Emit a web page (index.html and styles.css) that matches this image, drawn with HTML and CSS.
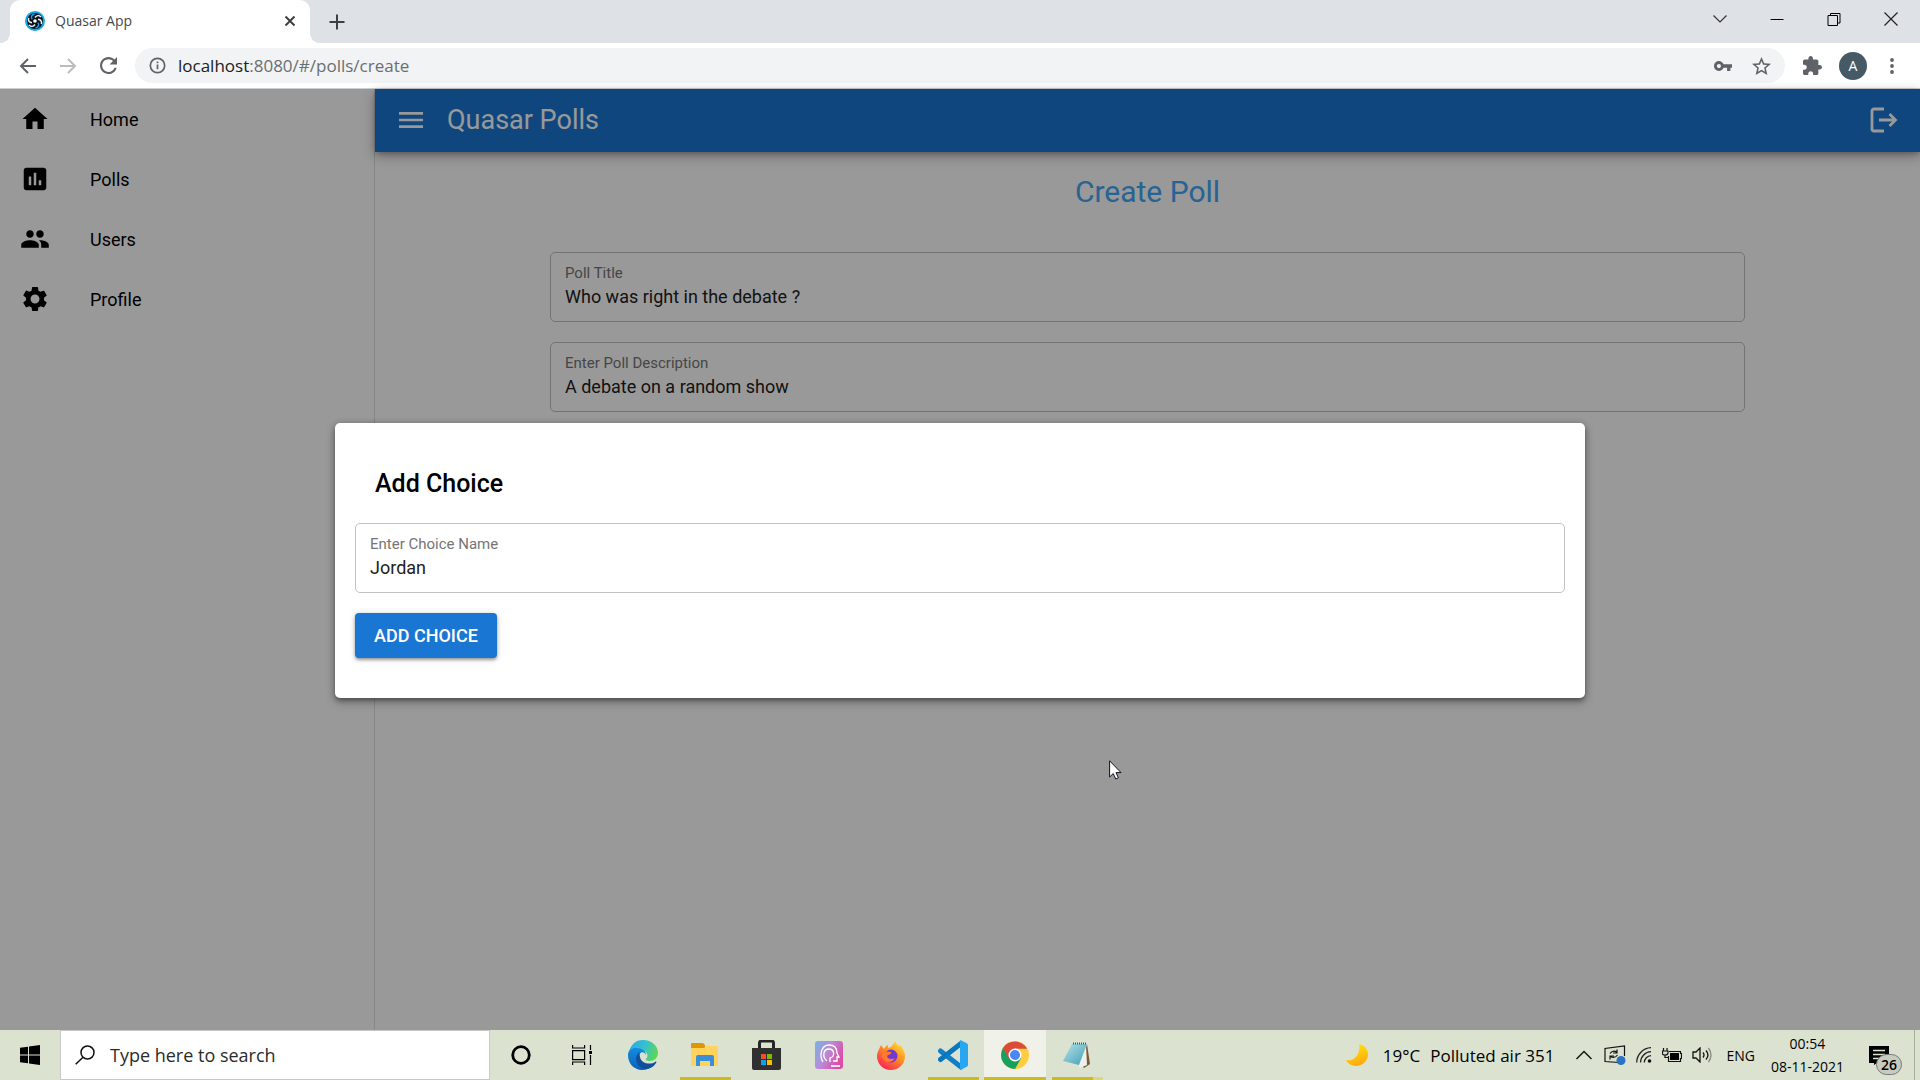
FILE: index.html
```html
<!DOCTYPE html>
<html lang="en">
<head>
<meta charset="utf-8">
<title>Quasar App</title>
<link rel="stylesheet" href="styles.css">
</head>
<body>
<header class="browser">
  <div class="tabstrip">
    <div class="tab">
      <svg class="favicon" viewBox="0 0 20 20" width="20" height="20">
        <circle cx="10" cy="10" r="9" fill="#0b1118" stroke="#12a7e8" stroke-width="2"/>
        <g fill="none" stroke="#e8f4fa" stroke-width="1.5">
          <path d="M10 6.5Q12.500 3 16 6"/><path d="M13 8.250Q17.300 8.700 16.400 13.200"/>
          <path d="M7 11.750Q2.700 11.300 3.600 6.800"/><path d="M10 13.500Q7.500 17 4 14"/>
        </g>
        <g fill="none" stroke="#12a7e8" stroke-width="1.400"><path d="M7 8.250Q5.200 4.300 9.500 3"/><path d="M13 11.750Q14.800 15.700 10.500 17"/></g>
        <circle cx="10" cy="10" r="1.800" fill="#fff"/>
      </svg>
      <span class="tab-title">Quasar App</span>
      <button class="icon-btn tab-close" aria-label="Close tab"><svg viewBox="0 0 12 12" width="12" height="12" fill="none" stroke="#3c4043" stroke-width="2"><path d="M1.500 1.500l9 9M10.500 1.500l-9 9"/></svg></button>
    </div>
    <button class="icon-btn new-tab" aria-label="New tab"><svg viewBox="0 0 16 16" width="16" height="16" fill="none" stroke="#3c4043" stroke-width="2"><path d="M8 0.500v15M0.500 8h15"/></svg></button>
    <div class="window-controls">
      <button class="icon-btn" aria-label="Search tabs"><svg viewBox="0 0 14 14" width="14" height="14" fill="none" stroke="#333" stroke-width="1.200"><path d="M0.500 3.500l6.500 6.500 6.500-6.500"/></svg></button>
      <button class="icon-btn" aria-label="Minimize"><svg viewBox="0 0 14 14" width="14" height="14"><path d="M0.500 7h13v1h-13z"/></svg></button>
      <button class="icon-btn" aria-label="Restore"><svg viewBox="0 0 14 14" width="14" height="14" fill="none" stroke="#000"><path d="M1 3.500h9.500V13.500H1zM3.500 3.500V1.500H13V11h-2.500"/></svg></button>
      <button class="icon-btn" aria-label="Close"><svg viewBox="0 0 14 14" width="14" height="14" fill="none" stroke="#222" stroke-width="1.200"><path d="M0.500 0.500l13 13M13.500 0.500l-13 13"/></svg></button>
    </div>
  </div>
  <div class="toolbar">
    <button class="icon-btn nav-btn" aria-label="Back"><svg viewBox="0 0 18 16" width="18" height="16" fill="none" stroke="#5f6368" stroke-width="2"><path d="M17 8H2M9 1L2 8l7 7"/></svg></button>
    <button class="icon-btn nav-btn" aria-label="Forward"><svg viewBox="0 0 18 16" width="18" height="16" fill="none" stroke="#babcbe" stroke-width="2"><path d="M1 8h15M9 1l7 7-7 7"/></svg></button>
    <button class="icon-btn nav-btn" aria-label="Reload"><svg viewBox="4 4 16 16" width="17" height="17" fill="#5f6368"><path d="M17.650 6.350C16.200 4.900 14.210 4 12 4c-4.420 0-7.990 3.580-7.990 8s3.570 8 7.990 8c3.730 0 6.840-2.550 7.730-6h-2.080c-.82 2.330-3.040 4-5.650 4-3.310 0-6-2.690-6-6s2.690-6 6-6c1.660 0 3.140.69 4.220 1.780L13 11h7V4l-2.350 2.350z"/></svg></button>
    <div class="omnibox">
      <svg viewBox="0 0 18 18" width="17" height="17" fill="none" stroke="#5f6368" stroke-width="1.800"><circle cx="9" cy="9" r="7.600"/><path d="M9 8v5M9 4.800v1.900"/></svg>
      <a class="url" href="#/polls/create"><span class="url-host">localhost</span>:8080/#/polls/create</a>
      <button class="icon-btn" aria-label="Passwords"><svg viewBox="1 6 22 12" width="18" height="10" fill="#5f6368"><path d="M12.650 10C11.830 7.670 9.610 6 7 6c-3.310 0-6 2.690-6 6s2.690 6 6 6c2.610 0 4.830-1.670 5.650-4H17v4h4v-4h2v-4H12.650zM7 14.500c-1.380 0-2.500-1.120-2.500-2.500s1.120-2.500 2.500-2.500 2.500 1.120 2.500 2.500-1.120 2.500-2.500 2.500z"/></svg></button>
      <button class="icon-btn" aria-label="Bookmark"><svg viewBox="2 2 20 19" width="19" height="18" fill="#5f6368"><path d="M22 9.240l-7.190-.62L12 2 9.190 8.630 2 9.240l5.460 4.730L5.820 21 12 17.270 18.180 21l-1.630-7.030L22 9.240zM12 15.400l-3.760 2.270 1-4.280-3.320-2.880 4.380-.38L12 6.100l1.710 4.040 4.380.38-3.320 2.880 1 4.280L12 15.400z"/></svg></button>
    </div>
    <button class="icon-btn ext" aria-label="Extensions"><svg viewBox="2 1 21 21" width="19" height="19" fill="#5f6368"><path d="M20.500 11H19V7c0-1.100-.9-2-2-2h-4V3.500C13 2.120 11.880 1 10.500 1S8 2.120 8 3.500V5H4c-1.100 0-1.990.9-1.990 2v3.800H3.500c1.490 0 2.700 1.210 2.700 2.700s-1.210 2.700-2.700 2.700H2V20c0 1.100.9 2 2 2h3.800v-1.500c0-1.490 1.210-2.700 2.700-2.700 1.490 0 2.700 1.210 2.700 2.700V22H17c1.100 0 2-.9 2-2v-4h1.500c1.380 0 2.500-1.120 2.500-2.500S21.880 11 20.500 11z"/></svg></button>
    <button class="avatar" aria-label="Account">A</button>
    <button class="icon-btn kebab" aria-label="Menu"><svg viewBox="0 0 4 16" width="4" height="16" fill="#5f6368"><circle cx="2" cy="2" r="1.900"/><circle cx="2" cy="8" r="1.900"/><circle cx="2" cy="14" r="1.900"/></svg></button>
  </div>
</header>

<div class="app">
  <nav class="drawer">
    <a href="#/"><svg viewBox="0 0 24 24"><path d="M10 20v-6h4v6h5v-8h3L12 3 2 12h3v8z"/></svg>Home</a>
    <a href="#/polls"><svg viewBox="0 0 24 24"><path d="M19 3H5c-1.100 0-2 .9-2 2v14c0 1.100.9 2 2 2h14c1.100 0 2-.9 2-2V5c0-1.100-.9-2-2-2zM9 17H7v-7h2v7zm4 0h-2V7h2v10zm4 0h-2v-4h2v4z"/></svg>Polls</a>
    <a href="#/users"><svg viewBox="0 0 24 24"><path d="M16 11c1.660 0 2.990-1.340 2.990-3S17.660 5 16 5c-1.660 0-3 1.340-3 3s1.340 3 3 3zm-8 0c1.660 0 2.990-1.340 2.990-3S9.660 5 8 5C6.340 5 5 6.340 5 8s1.340 3 3 3zm0 2c-2.330 0-7 1.170-7 3.500V19h14v-2.500c0-2.330-4.670-3.500-7-3.500zm8 0c-.29 0-.62.020-.97.050 1.160.84 1.970 1.970 1.970 3.450V19h6v-2.500c0-2.330-4.670-3.500-7-3.500z"/></svg>Users</a>
    <a href="#/profile"><svg viewBox="0 0 24 24"><path d="M19.140 12.940c.04-.3.060-.61.060-.94 0-.32-.02-.64-.07-.94l2.030-1.580c.18-.14.230-.41.120-.61l-1.920-3.320c-.12-.22-.37-.29-.59-.22l-2.390.96c-.5-.38-1.030-.7-1.620-.94l-.36-2.540c-.04-.24-.24-.41-.48-.41h-3.840c-.24 0-.43.170-.47.410l-.36 2.540c-.59.240-1.130.57-1.620.94l-2.390-.96c-.22-.08-.47 0-.59.220L2.740 8.870c-.12.210-.08.470.120.610l2.030 1.580c-.05.300-.09.630-.09.940s.02.640.070.940l-2.030 1.580c-.18.140-.23.410-.12.610l1.920 3.320c.12.220.37.290.59.220l2.390-.96c.5.380 1.030.7 1.620.94l.36 2.540c.05.240.24.410.48.410h3.840c.24 0 .44-.17.470-.41l.36-2.540c.59-.24 1.130-.56 1.620-.94l2.390.96c.22.080.47 0 .59-.22l1.920-3.320c.12-.22.070-.47-.12-.61l-2.010-1.580zM12 15.600c-1.980 0-3.600-1.620-3.600-3.600s1.620-3.600 3.600-3.600 3.600 1.620 3.600 3.600-1.620 3.600-3.600 3.600z"/></svg>Profile</a>
  </nav>
  <div class="main">
    <div class="app-bar">
      <button class="icon-btn" aria-label="Toggle menu"><svg viewBox="0 0 24 24" width="32" height="32" fill="#fff"><path d="M3 18h18v-2H3v2zm0-5h18v-2H3v2zm0-7v2h18V6H3z"/></svg></button>
      <span class="app-title">Quasar Polls</span>
      <button class="icon-btn" aria-label="Log out"><svg viewBox="0 0 30 30" width="30" height="30" fill="none" stroke="#fff" stroke-width="2.800"><path d="M16 4H6a2 2 0 0 0-2 2v18a2 2 0 0 0 2 2h10M11 15h17M21.500 9L27.500 15l-6 6"/></svg></button>
    </div>
    <main class="page">
      <h1>Create Poll</h1>
      <form class="poll-form">
        <label class="field"><span>Poll Title</span><input type="text" value="Who was right in the debate ?"></label>
        <label class="field"><span>Enter Poll Description</span><input type="text" value="A debate on a random show"></label>
      </form>
    </main>
  </div>
  <div class="backdrop">
    <section class="dialog" role="dialog" aria-labelledby="dialog-title">
      <h2 id="dialog-title">Add Choice</h2>
      <label class="field"><span>Enter Choice Name</span><input type="text" value="Jordan"></label>
      <button class="primary">ADD CHOICE</button>
    </section>
  </div>
</div>

<footer class="taskbar">
  <button class="icon-btn start" aria-label="Start"><svg viewBox="0 0 20 20" width="20" height="20"><path d="M0 2.800L8 1.700V9.500H0zM9 1.500L20 0v9.500H9zM0 10.500h8v7.800L0 17.200zM9 10.500h11V20L9 18.500z"/></svg></button>
  <label class="search">
    <svg viewBox="0 0 20 20" width="20" height="20" fill="none" stroke="#111" stroke-width="1.500"><circle cx="12.500" cy="7.500" r="6.500"/><path d="M8 12.200L0.700 19.300"/></svg>
    <input type="text" aria-label="Search" placeholder="Type here to search">
  </label>
  <div class="pins">
    <button class="icon-btn system" aria-label="Cortana"><svg viewBox="0 0 20 20" width="20" height="20"><circle cx="10" cy="10" r="8.300" fill="none" stroke="#000" stroke-width="2.800"/></svg></button>
    <button class="icon-btn system" aria-label="Task view"><svg viewBox="0 0 20 20" width="20" height="20" fill="none" stroke="#000" stroke-width="1.200"><path d="M0.600 5.600h12v9h-12zM0.600 0v3h12V0M0.600 20v-3h12v3M18.500 0v5M18.500 10v10"/><path d="M17 6h3v3h-3z" fill="#000" stroke="none"/></svg></button>
    <button class="icon-btn" aria-label="Edge"><svg viewBox="0 0 30 30" width="30" height="30">
      <defs><linearGradient id="e1" x1="0" y1="0.300" x2="1" y2="0.600"><stop offset="0" stop-color="#2aa9e8"/><stop offset=".5" stop-color="#35c1d0"/><stop offset="1" stop-color="#5fd84c"/></linearGradient><linearGradient id="e2" x2="0" y2="1"><stop stop-color="#168bdc"/><stop offset="1" stop-color="#0a62b8"/></linearGradient></defs>
      <path d="M1 11C4 3 9 0 15 0c9 0 15 6 15 13 0 5-4 8-8 8-3 0-5-1-4-2 3-3 1-8-3-8C9 10 5 9 1 11z" fill="url(#e1)"/>
      <path d="M0 15C0 10 4 8 8 8c6 0 10 3 10 7-1-3-5-4-6-1-2 5 4 14 9 14-3 2-6 2-8 2C5 29 0 23 0 15z" fill="url(#e2)"/>
      <path d="M12 12c-5 3-5 10-1 14 4 5 13 4 17-3 1-1 0-2-1-1-4 3-14 2-15-5-1-2-1-4 0-5z" fill="#104f9c"/></svg></button>
    <button class="icon-btn running" aria-label="File Explorer"><svg viewBox="0 0 28 24" width="28" height="24"><path d="M0 1q0-1 1-1h11l2 2v3H0z" fill="#dd9706"/><path d="M0 5h13l2-2h11q1 0 1 1v18q0 1-1 1H1q-1 0-1-1z" fill="#ffd35c"/><path d="M5 14q0-2 2-2h14q2 0 2 2v9h-4v-5h-10v5H5z" fill="#3b8fd8"/></svg></button>
    <button class="icon-btn" aria-label="Store"><svg viewBox="0 0 30 30" width="30" height="30"><path d="M7.500 9V3q0-2 2-2h10q2 0 2 2v6" fill="none" stroke="#252525" stroke-width="3"/><path d="M0 8h29v20q0 2-2 2H2q-2 0-2-2z" fill="#303030"/><path d="M9 14h5v5H9z" fill="#f25022"/><path d="M15 14h5v5h-5z" fill="#7fba00"/><path d="M9 20h5v5H9z" fill="#00a4ef"/><path d="M15 20h5v5h-5z" fill="#ffb900"/></svg></button>
    <button class="icon-btn" aria-label="MyASUS"><svg viewBox="0 0 28 28" width="28" height="28"><defs><linearGradient id="m1" y2="0.500"><stop stop-color="#75b5e0"/><stop offset=".5" stop-color="#b98bd8"/><stop offset="1" stop-color="#dc4ea5"/></linearGradient></defs><rect width="28" height="28" rx="3" fill="url(#m1)"/><g fill="none" stroke="#fff" stroke-width="1.300"><path d="M8 21C4 15 6 4 14 4c6 0 8 4 8 8l2 4h-2v4h-4M12 20c-5-4-4-12 2-12 6 0 6 8 1 9v4"/></g><path d="M16 24h9v2h-9z" fill="#fff" opacity=".8"/></svg></button>
    <button class="icon-btn" aria-label="Firefox"><svg viewBox="0 0 28 29" width="28" height="29"><defs><linearGradient id="f1" x1="1" x2="0.300" y2="1"><stop stop-color="#fff04a"/><stop offset=".45" stop-color="#ff9a1f"/><stop offset="1" stop-color="#fb2655"/></linearGradient></defs><path d="M3 6l1-2 3 4 2-3 2-1 0 3 3-1 3-4 1-2c1 3 3 4 4 5l1-1c3 3 5 7 5 11 0 8-6 14-14 14S0 23 0 15c0-4 2-6 3-9z" fill="url(#f1)"/><circle cx="14" cy="15" r="6.500" fill="#7038d5"/><path d="M5 10l9 1c1 2-3 3-4 4 0 3 5 4 8 2-3 6-11 5-13-1z" fill="#ff7931"/></svg></button>
    <button class="icon-btn running" aria-label="Visual Studio Code"><svg viewBox="0 0 30 30" width="30" height="30"><path d="M2.500 11L23 27" stroke="#117fc5" stroke-width="5" stroke-linecap="round"/><path d="M2.500 19.500L23 3.500" stroke="#0877bc" stroke-width="5" stroke-linecap="round"/><path d="M22 0l6.500 3Q30 4 30 5v20q0 1-1.500 2L22 30z" fill="#27a6f2"/></svg></button>
    <button class="icon-btn running active" aria-label="Chrome"><svg viewBox="0 0 28 28" width="28" height="28"><circle cx="14" cy="14" r="14" fill="#ffcd42"/><path d="M14 14L1.900 7A14 14 0 0 0 14 28l6-10.500z" fill="#18a05e"/><path d="M14 14L1.900 7A14 14 0 0 1 26.100 7.700H14z" fill="#db4b3b"/><path d="M1.900 7l6 10.500L14 14V7.700z" fill="#db4b3b"/><circle cx="14" cy="14" r="6.500" fill="#fff"/><circle cx="14" cy="14" r="5" fill="#4b87f4"/></svg></button>
    <button class="icon-btn running stacked" aria-label="Notepad"><svg viewBox="0 0 28 26" width="28" height="26"><path d="M24 2l3 20-6 4-3-4z" fill="#7a5a33"/><path d="M23 3l1 20-7 3-2-4z" fill="#f0efe9"/><defs><linearGradient id="n1" x2="1" y2="1"><stop stop-color="#b5e2e8"/><stop offset="1" stop-color="#3f9fb4"/></linearGradient></defs><path d="M9 2h15l-8 21L0 19z" fill="url(#n1)"/><path d="M10 1.500h14" stroke="#555" stroke-width="2" stroke-dasharray="1 1"/></svg></button>
  </div>
  <div class="tray">
    <svg viewBox="0 0 22 22" width="22" height="22"><defs><linearGradient id="w1" x2="0.300" y2="1"><stop stop-color="#ffe900"/><stop offset="1" stop-color="#ffac10"/></linearGradient></defs><path d="M13 0C20 1 24 9 21 15 17 24 4 24 0 16 8 18 15 10 13 0z" fill="url(#w1)"/></svg>
    <span class="weather"><span>19°C</span><span>Polluted air 351</span></span>
    <button class="icon-btn" aria-label="Show hidden icons"><svg viewBox="0 0 16 10" width="16" height="10" fill="none" stroke="#111" stroke-width="1.400"><path d="M0.500 9L8 1.500 15.500 9"/></svg></button>
    <div class="status">
      <svg viewBox="0 0 22 20" width="22" height="20" fill="none" stroke="#111" stroke-width="1.200"><path d="M15 17.500L1 16.500V3.500L20.500 1v10M6 8.500q3-4 7-1M13 4.500v3.500h-4M13.500 10q-3 4-7 1.500M6 14.500V11h4"/><circle cx="17" cy="15.500" r="4.500" fill="#2a72c4" stroke="none"/></svg>
      <svg viewBox="0 0 16 16" width="16" height="16" fill="none" stroke="#222" stroke-width="1.300"><path d="M0.700 15.500A15 15 0 0 1 15 0.700M4.500 15.500A11 11 0 0 1 15 4.700M8.300 15.500A7 7 0 0 1 15 8.700"/><circle cx="13.500" cy="14" r="1.800" fill="#111" stroke="none"/></svg>
      <svg viewBox="0 0 20 14" width="20" height="14"><path d="M8 5h9v7H8z"/><path d="M7 3.500h11.500v2H19.500v5h-1v3H6.500V8" fill="none" stroke="#111" stroke-width="1.200"/><path d="M1.500 0v3M5 0v3M0.500 3h5.500v2q0 2-3 2t-2.500-2zM3 7v2.500h3" fill="none" stroke="#111" stroke-width="1.200"/></svg>
      <svg viewBox="0 0 20 16" width="20" height="16" fill="none" stroke="#111" stroke-width="1.300"><path d="M1 5h3l4-4v14l-4-4H1zM11 5.500q2 2.500 0 5M14 3.500q4 4.500 0 9"/><path d="M16.500 1q5 7 0 14" stroke="#888"/></svg>
    </div>
    <span class="lang">ENG</span>
    <time class="clock" datetime="2021-11-08T00:54"><span>00:54</span><span>08-11-2021</span></time>
    <button class="icon-btn notes" aria-label="Notifications"><svg viewBox="0 0 20 19" width="20" height="19"><path d="M0 0h20v17H8l-3 2v-2H0z"/><path d="M4 4.500h12M4 8.500h12M4 12.500h7" stroke="#dce2d0" stroke-width="1.300"/></svg><span class="badge">26</span></button>
  </div>
</footer>
<svg class="cursor" viewBox="0 0 13 20" width="13" height="20"><path d="M0.600 0.800V17l3.600-3.400 2.600 5.400 2.600-1.200L7 12.600h5z" fill="#fff" stroke="#101020"/></svg>
</body>
</html>
```

FILE: styles.css
```css
* { box-sizing: border-box; }

body {
  margin: 0;
  height: 100vh;
  display: flex;
  flex-direction: column;
  overflow: hidden;
  font-family: Roboto, sans-serif;
  font-size: 18px;
  color: #000;
}

button, input { font: inherit; color: inherit; border: 0; padding: 0; margin: 0; background: none; }
h1, h2 { margin: 0; }
a { color: inherit; text-decoration: none; }
svg { flex: none; display: block; }

.icon-btn { display: flex; align-items: center; justify-content: center; }

/* Browser window */
.browser { flex: none; font-family: "Open Sans", sans-serif; border-bottom: 1px solid #cdcfd1; }

.tabstrip { display: flex; height: 43px; padding-left: 10px; background: #dee1e6; }
.tab {
  position: relative;
  display: flex;
  align-items: center;
  gap: 10px;
  width: 300px;
  padding: 0 14px 2px 15px;
  background: #fff;
  border-radius: 10px 10px 0 0;
}
.tab::before, .tab::after {
  content: "";
  position: absolute;
  bottom: 0;
  width: 10px;
  height: 10px;
}
.tab::before { left: -10px; background: radial-gradient(circle at 0 0, #dee1e6 10px, #fff 10px); }
.tab::after { right: -10px; background: radial-gradient(circle at 100% 0, #dee1e6 10px, #fff 10px); }
.tab-title { flex: 1; font-size: 14px; color: #45494d; }
.new-tab { width: 54px; }
.window-controls { display: flex; margin-left: auto; height: 37px; padding-right: 1px; }
.window-controls .icon-btn { width: 57px; }

.toolbar { display: flex; align-items: center; height: 45px; padding: 0 20px 0 8px; background: #fff; }
.nav-btn { width: 40px; height: 40px; }
.omnibox {
  flex: 1;
  display: flex;
  align-items: center;
  gap: 20px;
  height: 35px;
  margin-left: 7px;
  padding: 0 14px;
  border-radius: 18px;
  background: #f1f3f4;
}
.url { flex: 1; margin-left: -8px; font-size: 17px; color: #6a6e73; }
.url-host { color: #202124; }
.ext { width: 54px; }
.avatar { width: 28px; height: 28px; border-radius: 14px; background: #455a64; color: #fff; font-size: 14px; }
.kebab { width: 16px; margin-left: 17px; }

/* Application */
.app { position: relative; flex: 1; display: flex; min-height: 0; background: #fff; }

.drawer { width: 375px; border-right: 1px solid #e0e0e0; }
.drawer a { display: flex; align-items: center; gap: 40px; height: 60px; padding: 0 20px; }
.drawer svg { width: 30px; height: 30px; }

.main { flex: 1; }
.app-bar {
  display: flex;
  align-items: center;
  gap: 20px;
  height: 63px;
  padding: 0 22px 2px 20px;
  background: #1976d2;
  color: #fff;
  box-shadow: 0 2px 5px rgba(0, 0, 0, .2), 0 4px 12px rgba(0, 0, 0, .3);
}
.app-title { flex: 1; font-size: 27px; font-weight: 400; }

.page { padding: 20px; text-align: center; }
.page h1 { font-size: 30px; line-height: 40px; font-weight: 400; color: #42a5f5; }
.poll-form { display: grid; gap: 20px; max-width: 1195px; margin: 40px auto 0; text-align: left; }

.field {
  display: flex;
  flex-direction: column;
  height: 70px;
  padding: 10px 14px;
  border: 1px solid #c2c2c2;
  border-radius: 5px;
}
.field span { font-size: 15px; line-height: 20px; color: #757575; }
.field input { height: 26px; color: #212121; }
.field input:focus { outline: none; }

.backdrop {
  position: absolute;
  inset: 0;
  display: flex;
  align-items: center;
  justify-content: center;
  padding: 32px 30px 30px;
  background: rgba(0, 0, 0, .4);
}
.dialog {
  width: 100%;
  max-width: 1250px;
  padding: 20px 20px 40px;
  border-radius: 5px;
  background: #fff;
  box-shadow: 0 1px 6px rgba(0, 0, 0, .2), 0 3px 3px rgba(0, 0, 0, .14), 0 4px 10px rgba(0, 0, 0, .3);
}
.dialog h2 { padding: 21px 20px 19px; font-size: 25px; line-height: 40px; font-weight: 500; }
.primary {
  height: 45px;
  margin-top: 20px;
  padding: 0 19px;
  border-radius: 4px;
  background: #1976d2;
  color: #fff;
  font-weight: 500;
  box-shadow: 0 1px 6px rgba(0, 0, 0, .2), 0 2px 3px rgba(0, 0, 0, .3);
}

/* Desktop taskbar */
.taskbar {
  flex: none;
  display: flex;
  align-items: stretch;
  height: 50px;
  background: #dce2d0;
  font-family: "Open Sans", sans-serif;
}
.start { width: 60px; }
.search {
  display: flex;
  align-items: center;
  gap: 15px;
  width: 430px;
  padding-left: 14px;
  border: 1px solid #c8c8c8;
  background: #fff;
}
.search input { flex: 1; font-size: 18px; }
.search input::placeholder { color: #2b2b2b; }

.pins { display: flex; }
.pins .icon-btn { position: relative; width: 62px; }
.pins .system { width: 61px; }
.running::after {
  content: "";
  position: absolute;
  bottom: 0;
  left: 6px;
  right: 5px;
  height: 3px;
  background: #cdb928;
}
.active { background: #f0f2ea; }
.active::after { left: 0; right: 0; }
.stacked::after { background: linear-gradient(90deg, #cdb928 41px, #dcd585 41px); }

.tray { display: flex; align-items: center; margin-left: auto; padding-right: 5px; }
.weather { display: flex; gap: 10px; margin: 0 22px 0 15px; font-size: 17px; white-space: nowrap; }
.status { display: flex; align-items: center; gap: 10px; margin: 0 14px 0 12px; }
.lang { font-size: 14px; }
.clock { display: flex; flex-direction: column; align-items: center; margin-left: 16px; font-size: 14px; line-height: 23px; }
.notes { position: relative; width: 71px; height: 50px; border-right: 1px solid #a9ae9f; }
.badge {
  position: absolute;
  left: 32px;
  top: 24px;
  width: 26px;
  height: 21px;
  border: 1px solid #777;
  border-radius: 11px;
  background: #c8ccc0;
  font-size: 14px;
  line-height: 19px;
  font-weight: 600;
}

.cursor { position: absolute; left: 1109px; top: 760px; }
```
